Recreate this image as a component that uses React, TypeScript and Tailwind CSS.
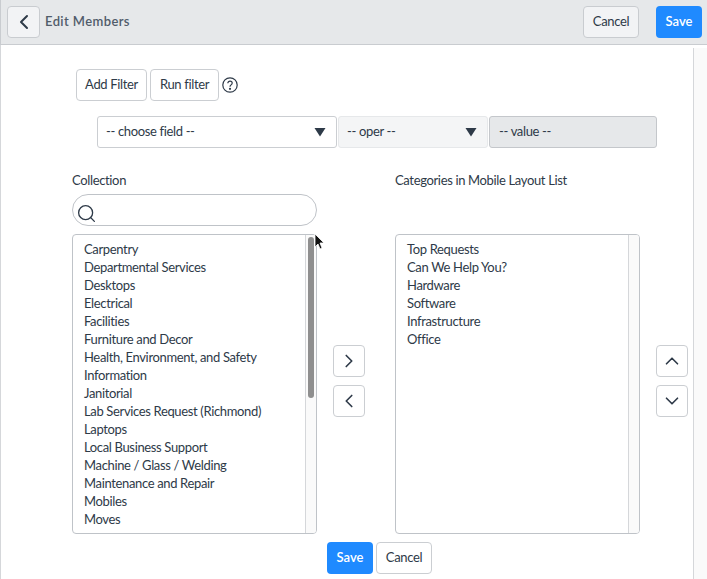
import { ChevronLeft, ChevronRight, ChevronUp, ChevronDown, Search } from 'lucide-react'

const collection = [
  'Carpentry',
  'Departmental Services',
  'Desktops',
  'Electrical',
  'Facilities',
  'Furniture and Decor',
  'Health, Environment, and Safety',
  'Information',
  'Janitorial',
  'Lab Services Request (Richmond)',
  'Laptops',
  'Local Business Support',
  'Machine / Glass / Welding',
  'Maintenance and Repair',
  'Mobiles',
  'Moves',
  'Networks and Printers',
]

const categories = ['Top Requests', 'Can We Help You?', 'Hardware', 'Software', 'Infrastructure', 'Office']

function IconButton({ children }: { children: React.ReactNode }) {
  return (
    <button className="w-8 h-8 flex items-center justify-center bg-white border border-[#cbced2] rounded-[4px] text-[#2e3a48]">
      {children}
    </button>
  )
}

function Select({ label, className }: { label: string; className: string }) {
  return (
    <div className={`h-8 flex items-center justify-between pl-2 pr-[10px] border rounded-[3px] ${className}`}>
      <span>{label}</span>
      <svg width="12" height="10" viewBox="0 0 12 10">
        <path d="M0.5 1h11L6 9.5z" fill="#2e3a48" />
      </svg>
    </div>
  )
}

function ListBox({ items, thumb }: { items: string[]; thumb?: boolean }) {
  return (
    <div className="h-[300px] w-[245px] flex bg-white border border-[#bfc3c8] rounded-[4px] overflow-hidden">
      <div className="flex-1 h-[296px] pt-[5px] pl-[11px] overflow-hidden leading-[18px]">
        {items.map((item) => (
          <div key={item} className="h-[18px] whitespace-nowrap">
            {item}
          </div>
        ))}
      </div>
      <div className="w-[11px] bg-[#fafafa] border-l border-[#d5d7da] pt-[2px] pl-[2px]">
        {thumb && <div className="w-[6px] h-[161px] bg-[#8f8f8f] rounded-[3px]" />}
      </div>
    </div>
  )
}

export default function App() {
  return (
    <div className="relative w-[707px] h-[579px] overflow-hidden bg-white text-[#2e3a48] text-[13px] tracking-[-0.35px] font-['Lato','Open_Sans',sans-serif]">
      {/* Header */}
      <div className="h-[45px] flex items-center justify-between pl-[6px] pr-[5px] bg-[#e6e8ea] border-b border-[#c9ccd0] border-l">
        <div className="flex items-center gap-[5px]">
          <button className="w-[33px] h-8 flex items-center justify-center bg-[#f2f3f5] border border-[#c9ccd0] rounded-[4px]">
            <ChevronLeft size={24} strokeWidth={2} />
          </button>
          <span className="font-semibold text-[#515c6a] tracking-[0.4px]">Edit Members</span>
        </div>
        <div className="flex items-center gap-[17px]">
          <button className="w-14 h-8 bg-[#f2f3f5] border border-[#c9ccd0] rounded-[4px]">Cancel</button>
          <button className="w-[46px] h-8 bg-[#1f8aff] text-white font-semibold tracking-normal rounded-[4px]">Save</button>
        </div>
      </div>

      <div className="flex h-[534px]">
        <div className="w-[693px] border-l border-[#d5d7da] pl-[71px]">
          {/* Filter buttons */}
          <div className="flex items-center gap-[3px] mt-6 pl-1">
            <button className="w-[71px] h-8 bg-white border border-[#cbced2] rounded-[4px]">Add Filter</button>
            <button className="w-[69px] h-8 bg-white border border-[#cbced2] rounded-[4px]">Run filter</button>
            <svg width="16" height="16" viewBox="0 0 16 16" fill="none" stroke="#2e3a48" strokeWidth="1.2">
              <circle cx="8" cy="8" r="7.2" />
              <path d="M5.8 6.2c0-1.3 1-2.1 2.2-2.1s2.2.8 2.2 2c0 1.8-2.2 1.8-2.2 3.6" />
              <circle cx="8" cy="11.8" r="0.5" fill="#2e3a48" />
            </svg>
          </div>

          {/* Filter fields */}
          <div className="flex gap-px mt-[15px] ml-[25px]">
            <Select label="-- choose field --" className="w-[240px] bg-white border-[#cbced2]" />
            <Select label="-- oper --" className="w-[150px] bg-[#f4f5f6] border-[#e6e8ea]" />
            <div className="w-[168px] h-8 flex items-center pl-[9px] bg-[#e6e8ea] border border-[#c4c7cb] rounded-[3px]">
              -- value --
            </div>
          </div>

          {/* Slushbuckets */}
          <div className="flex mt-[23px]">
            <div className="w-[245px]">
              <div className="h-[18px] leading-[18px]">Collection</div>
              <div className="h-8 mt-[5px] flex items-center pl-[3px] pt-[6px] border border-[#bfc3c8] rounded-2xl">
                <Search size={21} strokeWidth={1.5} />
              </div>
              <div className="mt-2">
                <ListBox items={collection} thumb />
              </div>
            </div>
            <div className="flex flex-col gap-2 ml-4 mt-[174px]">
              <IconButton>
                <ChevronRight size={22} strokeWidth={1.8} />
              </IconButton>
              <IconButton>
                <ChevronLeft size={22} strokeWidth={1.8} />
              </IconButton>
            </div>
            <div className="w-[245px] ml-[30px]">
              <div className="h-[18px] leading-[18px]">Categories in Mobile Layout List</div>
              <div className="mt-[45px]">
                <ListBox items={categories} />
              </div>
            </div>
            <div className="flex flex-col gap-2 ml-4 mt-[174px]">
              <IconButton>
                <ChevronUp size={22} strokeWidth={1.8} />
              </IconButton>
              <IconButton>
                <ChevronDown size={22} strokeWidth={1.8} />
              </IconButton>
            </div>
          </div>

          {/* Footer buttons */}
          <div className="flex gap-[3px] mt-2 ml-[255px]">
            <button className="w-[46px] h-8 bg-[#1f8aff] text-white font-semibold tracking-normal rounded-[4px]">Save</button>
            <button className="w-14 h-8 bg-white border border-[#cbced2] rounded-[4px]">Cancel</button>
          </div>
        </div>
        <div className="flex-1 mt-[3px] bg-[#fafafa] border-l border-[#d5d7da]" />
      </div>

      {/* Mouse cursor */}
      <svg className="absolute left-[314px] top-[233px]" width="12" height="18" viewBox="0 0 12 18">
        <path d="M1 1v13l3-3 2 5 2-1-2-5h4z" fill="#111" stroke="#fff" strokeWidth="0.8" />
      </svg>
    </div>
  )
}
